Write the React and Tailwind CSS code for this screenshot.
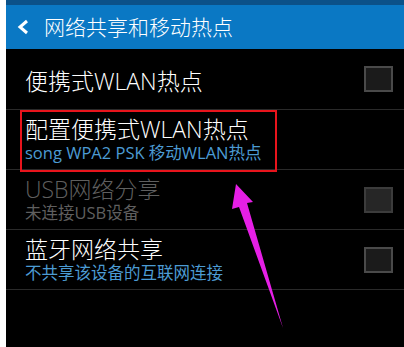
import React from "react";

const font = { fontFamily: "'Open Sans', 'Noto Sans CJK SC', sans-serif" };

function Check({ dim }) {
  return (
    <div
      className={`w-[29px] h-[26px] border-2 ${dim ? "border-[#3c3c3c] bg-[#262626]" : "border-[#4a4a4a] bg-[#1b1b1b]"}`}
    />
  );
}

function Row({ title, sub, dim, children }) {
  return (
    <div className="h-[60px] flex items-center justify-between pl-[19px] pr-[11px] border-b border-[#2a2a2a]">
      <div className="flex flex-col pt-[1px]">
        <span className={`text-[23px] leading-[26px] font-light ${dim ? "text-[#5f5f5f]" : "text-white"}`}>{title}</span>
        {sub && (
          <span className={`text-[16.5px] leading-[22px] ${dim ? "text-[#5f5f5f]" : "text-[#4c9bd3]"}`}>{sub}</span>
        )}
      </div>
      {children}
    </div>
  );
}

export default function App() {
  return (
    <div className="w-[404px] h-[347px] bg-white pl-[6px] relative overflow-hidden" style={font}>
      <div className="h-full bg-black flex flex-col">
        <div className="h-[5px] bg-[#0b5189]" />
        <div className="h-[44px] bg-[#0a78c4] flex items-center gap-[15px] pl-[11px]">
          <svg width="12" height="16" viewBox="0 0 12 16">
            <path d="M10 2 L3 8 L10 14" fill="none" stroke="white" strokeWidth="3" />
          </svg>
          <span className="text-white text-[21px] leading-none font-light">网络共享和移动热点</span>
        </div>
        <div className="h-[61px] flex items-center justify-between pl-[19px] pr-[11px] border-b border-[#2a2a2a]">
          <span className="text-white text-[23px] leading-[26px] pt-[3px] font-light">便携式WLAN热点</span>
          <Check />
        </div>
        <Row title="配置便携式WLAN热点" sub="song WPA2 PSK 移动WLAN热点" />
        <Row title="USB网络分享" sub="未连接USB设备" dim>
          <Check dim />
        </Row>
        <Row title="蓝牙网络共享" sub="不共享该设备的互联网连接">
          <Check />
        </Row>
      </div>
      <div className="absolute left-[20px] top-[110px] w-[257px] h-[62px] border-2 border-[#e8141c] pointer-events-none" />
      <svg className="absolute left-0 top-0 pointer-events-none" width="404" height="347" viewBox="0 0 404 347">
        <polygon points="236,184 253,202 247,203 283,328 239,207 232,209" fill="#e61fe6" />
      </svg>
    </div>
  );
}
